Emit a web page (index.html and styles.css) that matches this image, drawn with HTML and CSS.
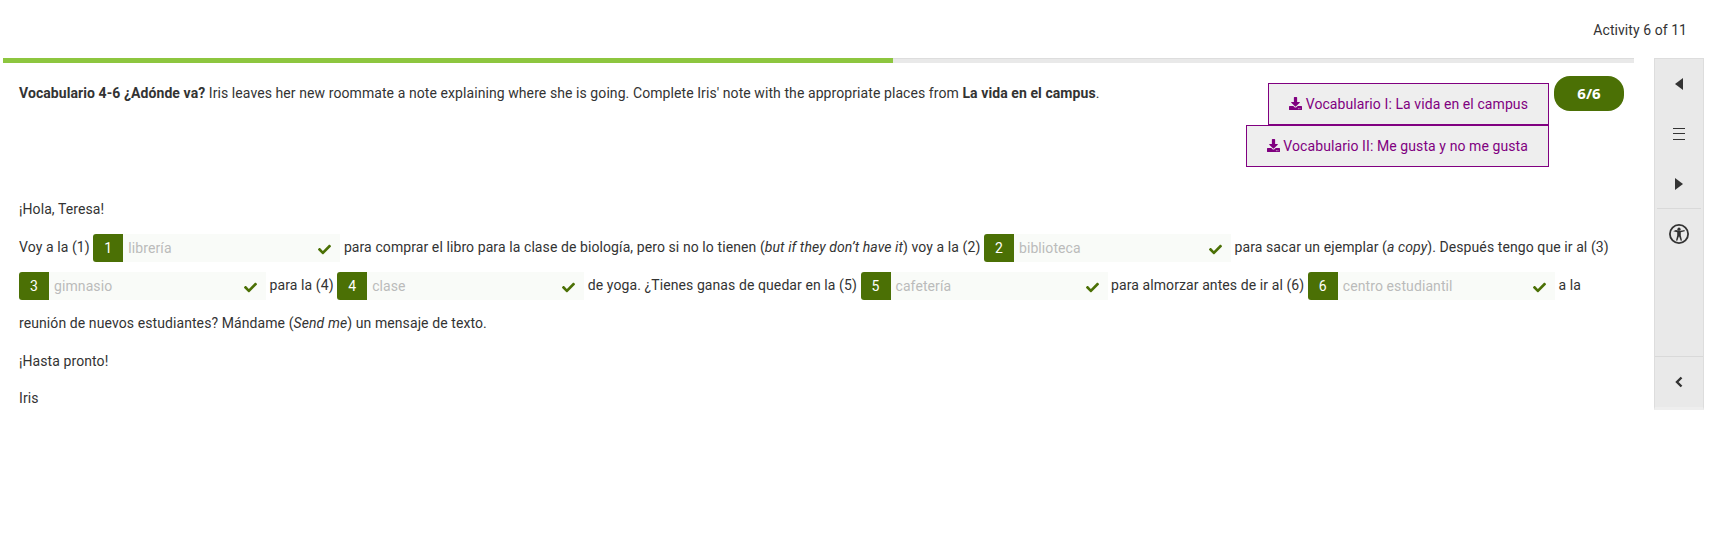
FILE: index.html
```html
<!DOCTYPE html>
<html lang="es">

<head>
    <meta charset="UTF-8">
    <title>Activity 6 of 11</title>
    <link rel="stylesheet" href="styles.css">
</head>

<body>
    <svg class="icon-defs" width="0" height="0">
        <symbol id="i-download" viewBox="0 0 512 512">
            <path d="M216 0h80c13.3 0 24 10.7 24 24v168h87.7c17.8 0 26.7 21.5 14.1 34.1L269.7 378.3c-7.5 7.5-19.8 7.5-27.3 0L90.1 226.1c-12.6-12.6-3.7-34.1 14.1-34.1H192V24c0-13.3 10.7-24 24-24zm296 376v112c0 13.3-10.7 24-24 24H24c-13.3 0-24-10.7-24-24V376c0-13.3 10.7-24 24-24h146.7l49 49c20.1 20.1 52.5 20.1 72.6 0l49-49H488c13.3 0 24 10.7 24 24zm-124 88c0-11-9-20-20-20s-20 9-20 20 9 20 20 20 20-9 20-20zm64 0c0-11-9-20-20-20s-20 9-20 20 9 20 20 20 20-9 20-20z" />
        </symbol>
        <symbol id="i-check" viewBox="0 0 512 512">
            <path d="M173.898 439.404l-166.4-166.4c-9.997-9.997-9.997-26.206 0-36.204l36.203-36.204c9.997-9.998 26.207-9.998 36.204 0L192 312.69 432.095 72.596c9.997-9.997 26.207-9.997 36.204 0l36.203 36.204c9.997 9.997 9.997 26.206 0 36.204l-294.4 294.401c-9.998 9.997-26.207 9.997-36.204-.001z" />
        </symbol>
    </svg>

    <header class="top-bar">Activity 6 of 11</header>

    <div class="layout">
        <main class="activity">
            <div class="progress">
                <div class="progress-fill"></div>
            </div>

            <div class="content">
                <div class="intro">
                    <p class="instructions"><b>Vocabulario 4-6 ¿Adónde va?</b> Iris leaves her new roommate a note explaining where she is going. Complete Iris' note with the appropriate places from <b>La vida en el campus</b>.</p>
                    <div class="resources">
                        <a class="resource" href="#"><svg class="icon-dl"><use href="#i-download" /></svg> Vocabulario I: La vida en el campus</a>
                        <a class="resource" href="#"><svg class="icon-dl"><use href="#i-download" /></svg> Vocabulario II: Me gusta y no me gusta</a>
                    </div>
                    <div class="score">6/6</div>
                </div>

                <div class="note">
                    <p>¡Hola, Teresa!</p>
                    <p>Voy a la (1)
                        <span class="blank"><span class="num">1</span><span class="answer">librería</span><svg class="icon-check"><use href="#i-check" /></svg></span>
                        para comprar el libro para la clase de biología, pero si no lo tienen (<i>but if they don’t have it</i>) voy a la (2)
                        <span class="blank"><span class="num">2</span><span class="answer">biblioteca</span><svg class="icon-check"><use href="#i-check" /></svg></span>
                        para sacar un ejemplar (<i>a copy</i>). Después tengo que ir al (3)
                        <span class="blank"><span class="num">3</span><span class="answer">gimnasio</span><svg class="icon-check"><use href="#i-check" /></svg></span>
                        para la (4)
                        <span class="blank"><span class="num">4</span><span class="answer">clase</span><svg class="icon-check"><use href="#i-check" /></svg></span>
                        de yoga. ¿Tienes ganas de quedar en la (5)
                        <span class="blank"><span class="num">5</span><span class="answer">cafetería</span><svg class="icon-check"><use href="#i-check" /></svg></span>
                        para almorzar antes de ir al (6)
                        <span class="blank"><span class="num">6</span><span class="answer">centro estudiantil</span><svg class="icon-check"><use href="#i-check" /></svg></span>
                        a la reunión de nuevos estudiantes? Mándame (<i>Send me</i>) un mensaje de texto.</p>
                    <p>¡Hasta pronto!</p>
                    <p class="signature">Iris</p>
                </div>
            </div>
        </main>

        <aside class="side-nav">
            <div class="nav-group">
                <button class="nav-btn"><svg width="8" height="12" viewBox="0 0 8 12"><path d="M8 0v12L0 6z" /></svg></button>
                <button class="nav-btn"><svg class="icon-menu" width="12" height="12" viewBox="0 0 12 12"><path d="M0 .5h12M0 5.5h12M0 11.5h12" /></svg></button>
                <button class="nav-btn"><svg width="8" height="12" viewBox="0 0 8 12"><path d="M0 0v12l8-6z" /></svg></button>
            </div>
            <div class="nav-access">
                <svg width="20" height="20" viewBox="0 0 20 20">
                    <circle class="ring" cx="10" cy="10" r="9.1" />
                    <circle cx="10" cy="5.2" r="1.6" />
                    <path d="M4.2 7.2l4 1v3.4L7 16.4l1.3.4 1.5-4.4h.4l1.5 4.4 1.3-.4-1.2-4.8V8.2l4-1-.3-1.1c-3.4.9-5.2.9-8.6 0z" />
                </svg>
            </div>
            <div class="nav-spacer"></div>
            <button class="nav-btn"><svg class="icon-chevron" width="8" height="12" viewBox="0 0 8 12"><path d="M6.5 1.5L2 6l4.5 4.5" /></svg></button>
        </aside>
    </div>
</body>

</html>
```

FILE: styles.css
```css
body {
    margin: 0;
    font-family: Roboto, sans-serif;
    font-size: 14px;
    color: #333;
    background-color: #fff;
}

p {
    margin: 0;
}

.icon-defs {
    position: absolute;
}

.top-bar {
    height: 58px;
    box-sizing: border-box;
    padding: 21px 26px 0 0;
    line-height: 18px;
    letter-spacing: .06px;
    text-align: right;
}

.layout {
    display: flex;
    padding-left: 3px;
}

.activity {
    width: 1631px;
}

.progress {
    height: 5px;
    background-color: #e9e9e9;
    box-shadow: inset 0 1px 0 #ddd;
}

.progress-fill {
    width: 890px;
    height: 5px;
    background-color: #8dc63f;
}

.content {
    padding: 13px 10px 0 16px;
}

.intro {
    display: flex;
    height: 114px;
    align-items: flex-start;
}

.instructions {
    flex: 1;
    line-height: 20px;
    padding-top: 7px;
    letter-spacing: .08px;
}

.resources {
    display: flex;
    flex-direction: column;
    align-items: flex-end;
    margin-top: 7px;
}

.resource {
    display: block;
    height: 42px;
    box-sizing: border-box;
    padding: 0 20px;
    line-height: 40px;
    letter-spacing: .09px;
    color: #800080;
    background-color: #eee;
    border: 1px solid #800080;
    text-decoration: none;
}

.icon-dl {
    width: 13px;
    height: 13px;
    fill: #800080;
    vertical-align: -1px;
}

.score {
    width: 70px;
    height: 35px;
    margin-left: 5px;
    border-radius: 16px;
    background-color: #4b7005;
    color: #fff;
    font-family: "Open Sans", sans-serif;
    font-weight: 700;
    font-size: 15px;
    line-height: 35px;
    text-align: center;
}

.note {
    line-height: 38px;
    letter-spacing: .09px;
}

.signature {
    margin-top: -1px;
}

.blank {
    display: inline-flex;
    align-items: center;
    width: 247px;
    height: 28px;
    line-height: 28px;
    background-color: #f9fbf8;
    vertical-align: middle;
}

.num {
    width: 30px;
    margin-right: 5px;
    background-color: #4b7005;
    color: #fff;
    text-align: center;
    border-radius: 3px 0 0 3px;
}

.answer {
    flex: 1;
    color: #bbb;
}

.icon-check {
    width: 13px;
    height: 13px;
    margin: 2px 9px 0 0;
    fill: #4b7005;
}

.side-nav {
    display: flex;
    flex-direction: column;
    width: 50px;
    height: 352px;
    box-sizing: border-box;
    margin-left: 20px;
    background-color: #e9e9e9;
    border: 1px solid #ddd;
    border-bottom-width: 3px;
    border-bottom-color: #eee;
}

.nav-btn {
    display: flex;
    align-items: center;
    justify-content: center;
    width: 100%;
    height: 50px;
    padding: 0;
    border: 0;
    background: none;
}

.nav-btn svg,
.nav-access svg {
    fill: #333;
}

.icon-menu {
    stroke: #333;
    stroke-width: 1;
}

.nav-group {
    height: 150px;
    box-sizing: border-box;
    margin: 0 2px;
    border-bottom: 1px solid #d9d9d9;
}

.nav-access {
    display: flex;
    align-items: center;
    justify-content: center;
    height: 50px;
}

.ring {
    fill: none;
    stroke: #333;
    stroke-width: 1.8;
}

.nav-spacer {
    flex: 1;
    border-bottom: 1px solid #d9d9d9;
}

.nav-btn .icon-chevron {
    fill: none;
    stroke: #333;
    stroke-width: 2.4;
}
```
